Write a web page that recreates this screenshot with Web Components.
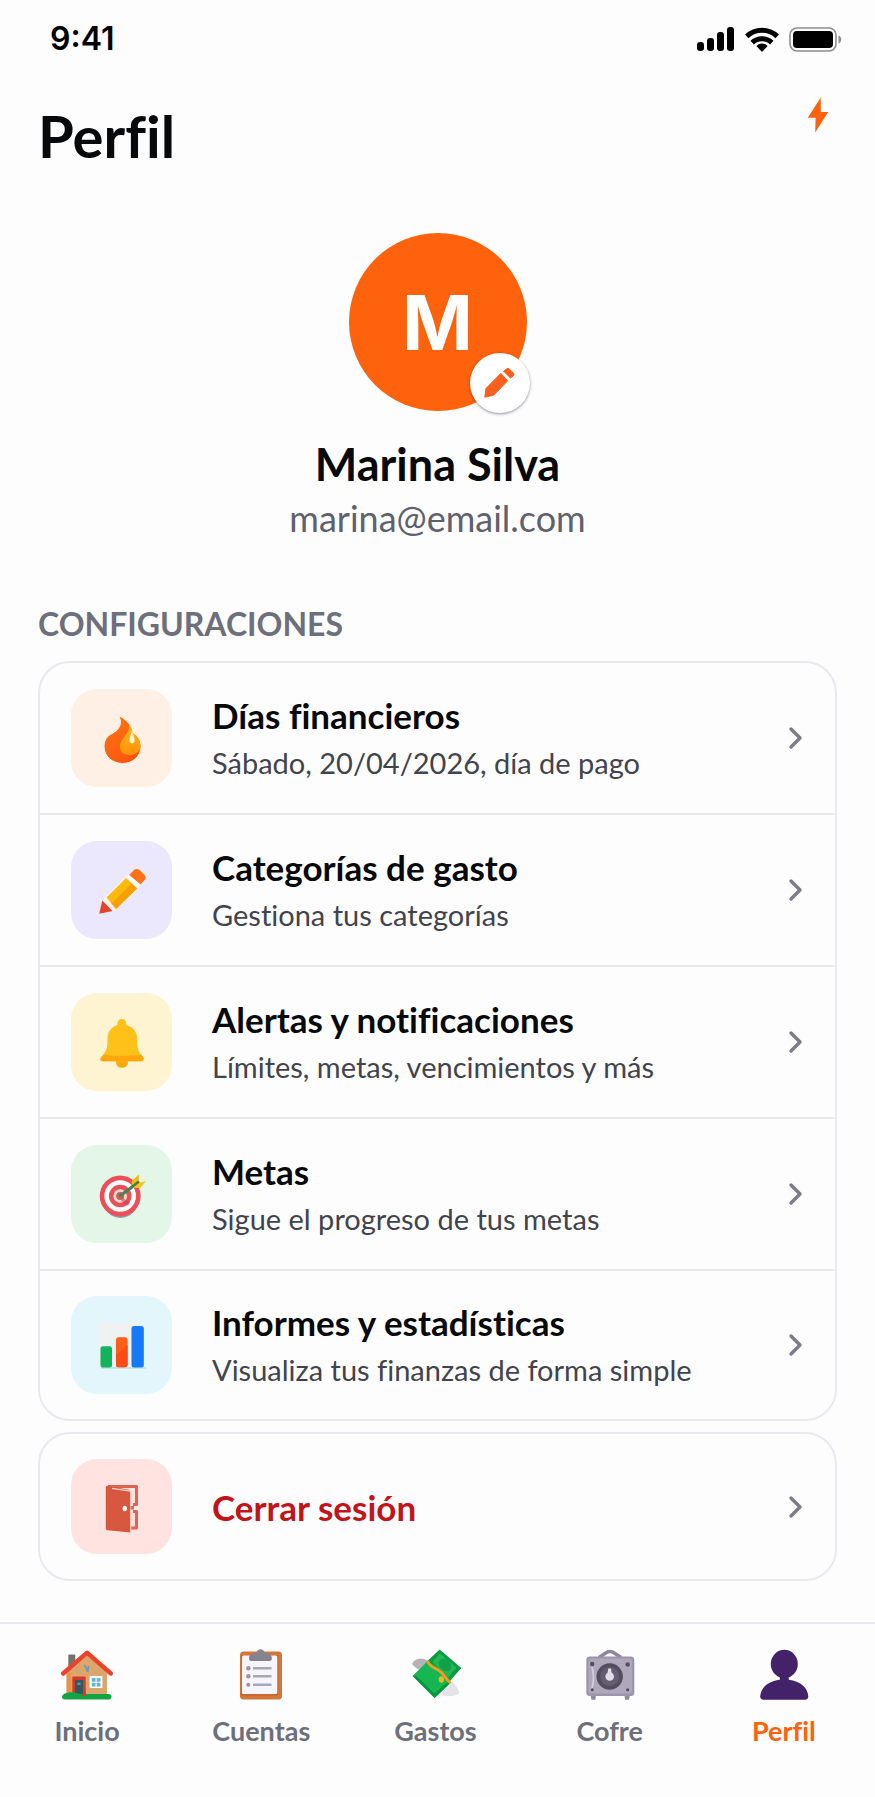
<!DOCTYPE html>
<html lang="es">
<head>
<meta charset="utf-8">
<meta name="viewport" content="width=device-width, initial-scale=1">
<title>Perfil</title>
<style>
    body {
        margin: 0;
        background: #fdfdfe;
        color: #08090b;
        font-family: Lato, "Liberation Sans", sans-serif;
        font-variant-ligatures: none;
        --orange: #fe620c;
        --line: #e8e9ee;
        --muted: #6d6f7a;
    }
</style>
</head>
<body>
<profile-page>
    <status-bar slot="status">9:41</status-bar>
    <page-header slot="header">Perfil</page-header>
    <user-card slot="user" initial="M">
        <span slot="name">Marina Silva</span>
        <span slot="email">marina@email.com</span>
    </user-card>

    <settings-group label="CONFIGURACIONES">
        <settings-row icon="fire" tint="#fef0e5">
            Días financieros
            <span slot="detail">Sábado, 20/04/2026, día de pago</span>
        </settings-row>
        <settings-row icon="pencil" tint="#ebe8fd">
            Categorías de gasto
            <span slot="detail">Gestiona tus categorías</span>
        </settings-row>
        <settings-row icon="bell" tint="#fef4d2">
            Alertas y notificaciones
            <span slot="detail">Límites, metas, vencimientos y más</span>
        </settings-row>
        <settings-row icon="target" tint="#e3f6e8">
            Metas
            <span slot="detail">Sigue el progreso de tus metas</span>
        </settings-row>
        <settings-row icon="chart" tint="#e2f6fc">
            Informes y estadísticas
            <span slot="detail">Visualiza tus finanzas de forma simple</span>
        </settings-row>
    </settings-group>

    <settings-group>
        <settings-row icon="door" tint="#fee3e1" danger>Cerrar sesión</settings-row>
    </settings-group>

    <tab-bar slot="tabs">
        <tab-item icon="house">Inicio</tab-item>
        <tab-item icon="clipboard">Cuentas</tab-item>
        <tab-item icon="money">Gastos</tab-item>
        <tab-item icon="safe">Cofre</tab-item>
        <tab-item icon="person" active>Perfil</tab-item>
    </tab-bar>
</profile-page>

<script>
const ICONS = {
    signal: [38, 24, `
        <rect y="15" width="7" height="9" rx="3"/>
        <rect x="10" y="11" width="7" height="13" rx="3"/>
        <rect x="20" y="5" width="7" height="19" rx="3"/>
        <rect x="30" width="7" height="24" rx="3"/>`],
    wifi: [34, 25, `
        <g fill="none" stroke="#000" stroke-width="5">
            <path d="M1.8 9.4a22 22 0 0 1 30.4 0"/>
            <path d="M7.2 15.6a14.2 14.2 0 0 1 19.6 0"/>
        </g>
        <path d="M17 25l-5.6-6.1a8 8 0 0 1 11.2 0z"/>`],
    battery: [53, 25, `
        <rect x="1" y="1" width="46" height="23" rx="7" fill="none" stroke="#8d8d90" stroke-width="1.6"/>
        <rect x="4" y="4" width="40" height="17" rx="4"/>
        <path d="M49.5 8.5c3.6 1 3.6 7 0 8z" fill="#8d8d90"/>`],
    bolt: [22, 36, `<path d="M13.8.4L.8 20.800h7.800L8.200 35.600l13-20.600h-7.400z" fill="#fe620c"/>`],
    edit: [32, 30, `
        <g fill="#fa5f1d" stroke="#fa5f1d" stroke-linejoin="round">
            <path d="M.8 29.2L2 20.4 16.8 5.4l6.900 7.300L9.600 27.200z"/>
            <path d="M19.600 3.200l3.400-2.600 2 .1 4.800 4.800.1 1.600-3.400 3z"/>
        </g>`],
    chevron: [16, 24, `<path d="M3 3l9 9-9 9" fill="none" stroke="#7b7c86" stroke-width="3.4" stroke-linecap="round" stroke-linejoin="round"/>`],
    fire: [52, 52, `
        <defs>
            <linearGradient id="a" x2=".6" y2="1"><stop stop-color="#ff7a14"/><stop offset="1" stop-color="#fb5510"/></linearGradient>
            <linearGradient id="b" x2="0" y2="1"><stop stop-color="#ffb31c"/><stop offset="1" stop-color="#ff9308"/></linearGradient>
        </defs>
        <path d="M22.5 3.5C30 7 36 13 37 21c5 3 8 8 8 13.500C45 44 37 51.500 26.500 51.500S8 44 8 34.500C8 28 11 24 16 21.500 22 18.300 24.800 14 24.400 9.500 24.200 7 23.500 5.500 22.500 3.500z" fill="url(#a)" stroke="#fff8ef" stroke-width="1"/>
        <path d="M32.800 12.500C34.500 22 24 26 24 35c0 5 4 8 9.500 8 5.700 0 10.500-3 11-8.500 0-5.500-3-10.500-7.700-13.500-.6-3.500-2-6.500-4-8.500z" fill="url(#b)"/>
        <path d="M36 19c-1.500 4-3 8-2.500 10.500.6 2.600 4.400 2.600 5 0C39 27 37.500 23 36 19z" fill="#fff6c8"/>`],
    pencil: [52, 52, `
        <path d="M3.2 49.7L8 33.500 31 11.500 43 23 19.500 46z" fill="#fff3ea"/>
        <path d="M10.500 33.500l19.500-19.500 11 10.500-21 20.500z" fill="#fdb909"/>
        <path d="M15.500 39.300L35.800 19.500l5.200 5-21 20.500z" fill="#f99f06"/>
        <path d="M33 11l5-5.100c1.600-1.300 4-1.300 5.600 0l5 5c1.500 1.700 1.500 3.600 0 5.100l-4.100 4.500z" fill="#fd7216"/>
        <path d="M31 13.200l2-2.200 11.500 9.500-2.500 2.800z" fill="#fff"/>
        <path d="M3.200 49.700L6.300 36.600 16.500 47z" fill="#e6432b"/>`],
    bell: [52, 52, `
        <ellipse cx="26" cy="46.500" rx="6" ry="5.200" fill="#fba80c"/>
        <path d="M25.800 3c-2.700 0-4.300 1.700-4.300 4v2C15 11 11.500 16 11.500 23c0 8-.5 12-5.500 17-2.500 2.500-1.800 5.200 1 5.200h38c2.800 0 3.700-2.700 1.200-5.200-4.500-4.500-5-9-5-17 0-7-4-12-11-14V7c0-2.300-1.700-4-4.400-4z" fill="#fec11a"/>
        <path d="M7.500 38.800c6 1.500 31 1.500 37.400 0l1.600 1.700c2 2.600 1 4.700-1.500 4.700H7c-2.800 0-3.500-2.200-1-4.700z" fill="#fda70d"/>`],
    target: [52, 52, `
        <ellipse cx="24.500" cy="31" rx="18" ry="19" fill="#7fa7ae"/>
        <circle cx="24.200" cy="28" r="20.500" fill="#ed4f5a"/>
        <circle cx="24.200" cy="28" r="15.800" fill="#fff"/>
        <circle cx="24.200" cy="28" r="11.300" fill="#e8515a"/>
        <circle cx="24.200" cy="28" r="6.800" fill="#f6d9cf"/>
        <circle cx="24.200" cy="28" r="4" fill="#c4625c"/>
        <path d="M26 29l8 6-2 3-7-5z" fill="#b93f48" opacity=".5"/>
        <path d="M24.500 27.500L39.500 16.500" stroke="#4d7f5d" stroke-width="3.400" stroke-linecap="round"/>
        <path d="M35.500 17.500l.5-5L43 6.500l-.5 8z" fill="#f2b90f"/>
        <path d="M37 19.500l5.500-5 7.500-1.300-6 7z" fill="#fcc81d"/>
        <path d="M35 19.500l8-6" stroke="#3f8050" stroke-width="2.400"/>`],
    chart: [52, 52, `
        <path d="M3 3.500h41v43H3z" fill="#eff1f3"/>
        <path d="M5 49h45" stroke="#b9dfe0" stroke-width="1.500"/>
        <rect x="4.500" y="27.300" width="11.500" height="21.200" rx="2.500" fill="#10b45b"/>
        <rect x="20" y="18.300" width="11.600" height="30" rx="2.500" fill="#fd5f1a"/>
        <path d="M20 36l11.600-10v20q0 2.300-2.300 2.300h-7q-2.300 0-2.300-2.300z" fill="#f94d15"/>
        <rect x="35.500" y="7" width="12.300" height="41.500" rx="2.500" fill="#147af6"/>`],
    door: [52, 52, `
        <g fill="none" stroke="#dc6450" stroke-width="3" stroke-linejoin="round">
            <path d="M12 5.500h28.500v18H37"/>
            <path d="M37 30.500h3.500V47H35"/>
        </g>
        <path d="M11.500 4.800L33 8.800q1.500.3 1.500 2v40.700L11.500 49.300q-1.700-.2-1.700-2V6.500q0-2 1.700-1.700z" fill="#d7573f"/>
        <path d="M16 7.400l18.500 2.800" stroke="#fbd5cf" stroke-width="1.200"/>
        <path d="M34.800 9v42" stroke="#fbd5cf" stroke-width="1"/>
        <ellipse cx="28.800" cy="27.500" rx="2.200" ry="2.700" fill="#fff"/>
        <rect x="34.500" y="25" width="3.500" height="3.500" fill="#c77468"/>`],
    house: [52, 52, `
        <rect x="7.300" y="5.500" width="7" height="15" rx="1" fill="#7a706a"/>
        <path d="M5.600 24L25.700 5 46 24v23H5.600z" fill="#dba56b"/>
        <path d="M5.600 24h4.200v23H5.600z" fill="#e8924d"/>
        <path d="M2.200 24.500L26 3.700l23.800 20.800" fill="none" stroke="#e9432c" stroke-width="4.400" stroke-linecap="round" stroke-linejoin="round"/>
        <rect x="11.300" y="27.500" width="13.400" height="20" rx="1" fill="#d6382b"/>
        <path d="M14 31h8v16h-8z" fill="#2f5a60"/>
        <path d="M16.500 33.500h3v2.500h-3z" fill="#4e98a5"/>
        <rect x="28.600" y="27" width="12.800" height="12" fill="#fff"/>
        <path d="M30.800 29h3.700v3.700h-3.700zM35.700 29h3.700v3.700h-3.700zM30.800 33.800h3.700v3.700h-3.700zM35.700 33.800h3.700v3.700h-3.700z" fill="#5fb5d6"/>
        <path d="M23.500 16l3 6M27.500 17l-1 6" stroke="#6f9bb5" stroke-width="1.800"/>
        <path d="M4 44.500c3-1.500 6-1.500 8.500-1.200 3 .2 4 1.600 8 1.700h27c4 0 4 5.500 0 5.500H4c-4 0-4-4.500 0-6z" fill="#14a543"/>
        <path d="M20 47h4.700v-5z" fill="#d6382b"/>`],
    clipboard: [52, 52, `
        <rect x="5" y="2.500" width="42" height="48" rx="3.500" fill="#d4763a"/>
        <path d="M6 6h37.500v41H6z" fill="#c96a30"/>
        <rect x="7" y="6.500" width="35.200" height="38.500" rx="1.500" fill="#f6f5fb"/>
        <path d="M14 9.500c0-4.300 3-5.200 7.500-5.700C22-1 29-1 29.500 3.800c4.500.5 7.300 1.400 7.300 5.700 0 1.700-.8 2.500-2.500 2.500h-18c-1.600 0-2.300-.8-2.300-2.500z" fill="#85838f"/>
        <path d="M18 19.200h18.500M18 27.300h18.500M18 35.800h18.500" stroke="#aaa7ba" stroke-width="2.400"/>
        <g fill="#a58d9c"><circle cx="13.300" cy="19.200" r="2.200"/><circle cx="13.300" cy="27.300" r="2.200"/><circle cx="13.300" cy="35.800" r="2"/></g>`],
    money: [52, 52, `
        <path d="M19 12C12 7.500 5.500 9.500 3 15c2 2.500 4 4.500 7 5.500z" fill="#b4b3b8"/>
        <path d="M41 32c5 2 7 6 9.500 11.500-3 4.500-13 4-18.500 2.500z" fill="#e4e4e8"/>
        <path d="M30.700.5L52.300 19 38.500 35 17.800 12.500z" fill="#0c9b41"/>
        <path d="M31 4.500l16.500 14.300-9.500 10.500-14.500-16.500z" fill="#23b856"/>
        <ellipse cx="36" cy="16" rx="7" ry="5.500" transform="rotate(42 36 16)" fill="#12a148"/>
        <path d="M18 12.500L3.600 27l22 22 15.700-15C39 23 30 18 18 12.500z" fill="#16b653"/>
        <path d="M3.600 27L7 26.500l18.500 18L40.500 31l.8 3-15.700 15z" fill="#07973e"/>
        <path d="M18.500 12c2.500 6.500 6.500 6.500 11.500 9.500 5 3.200 6 8 11.300 12.500" fill="none" stroke="#f69b21" stroke-width="2.800"/>
        <ellipse cx="32.300" cy="30.500" rx="2.600" ry="3.200" fill="#eeb91f"/>`],
    safe: [52, 52, `
        <path d="M15 8.500l7.500-5q3.500-2 7 0l7.500 5" fill="none" stroke="#8f889d" stroke-width="3.600"/>
        <path d="M6.500 46h5.500l-.6 4.700H7.500zM40.500 46H46l-1 4.700h-4z" fill="#918a9f"/>
        <rect x="2.300" y="7.500" width="48" height="39.500" rx="3.500" fill="#9b94aa"/>
        <rect x="4.500" y="9.500" width="43.500" height="35" rx="2.500" fill="#afa8bb"/>
        <path d="M8 18c2 7 2 14 0 21" fill="none" stroke="#d2cdd9" stroke-width="1.800"/>
        <circle cx="25.700" cy="27.500" r="13.200" fill="#544d60"/>
        <circle cx="25.700" cy="27.500" r="9.500" fill="#655d72"/>
        <path d="M24.300 19.500h2.700l.5 4.500h-4z" fill="#e4e1e8"/>
        <circle cx="25.700" cy="27.500" r="4.300" fill="#e0dde5"/>
        <g fill="#534e5c"><circle cx="8.200" cy="15" r="2.200"/><circle cx="43.700" cy="15.500" r="2.200"/><circle cx="43.700" cy="40.800" r="1.600"/><circle cx="8.300" cy="40.800" r="1.500"/></g>`],
    person: [52, 52, `
        <ellipse cx="26.300" cy="15" rx="13.500" ry="14.300" fill="#43226a"/>
        <path d="M22.500 26h7.600l.8 4.700C42 32 50 38.500 50.300 47.500c0 2-1.300 3.200-3.300 3.200H5.500c-2 0-3.500-1.200-3.300-3.200.5-9 8.300-15.500 19.500-16.800z" fill="#43226a"/>`]
};

class AppIcon extends HTMLElement {
    connectedCallback() {
        const [width, height, shapes] = ICONS[this.getAttribute('name')];
        this.attachShadow({ mode: 'open' }).innerHTML = `
            <style>
                :host { display: block; flex: none; }
                svg { display: block; }
            </style>
            <svg width="${width}" height="${height}" viewBox="0 0 ${width} ${height}" aria-hidden="true">${shapes}</svg>
        `;
    }
}

class ProfilePage extends HTMLElement {
    connectedCallback() {
        this.attachShadow({ mode: 'open' }).innerHTML = `
            <style>
                :host { display: flex; flex-direction: column; min-height: 100vh; }
                main { display: flex; flex-direction: column; gap: 11px; padding: 66px 38px 40px; flex: 1; }
            </style>
            <slot name="status"></slot>
            <slot name="header"></slot>
            <slot name="user"></slot>
            <main><slot></slot></main>
            <slot name="tabs"></slot>
        `;
    }
}

class StatusBar extends HTMLElement {
    connectedCallback() {
        this.attachShadow({ mode: 'open' }).innerHTML = `
            <style>
                :host {
                    display: flex;
                    justify-content: space-between;
                    align-items: center;
                    padding: 19px 33px 0 50px;
                    font: 600 32px/40px Inter, sans-serif;
                    color: #000;
                }
                div { display: flex; align-items: center; gap: 10px; }
            </style>
            <span><slot></slot></span>
            <div>
                <app-icon name="signal"></app-icon>
                <app-icon name="wifi"></app-icon>
                <app-icon name="battery"></app-icon>
            </div>
        `;
    }
}

class PageHeader extends HTMLElement {
    connectedCallback() {
        this.attachShadow({ mode: 'open' }).innerHTML = `
            <style>
                :host {
                    display: flex;
                    justify-content: space-between;
                    align-items: flex-start;
                    padding: 38px 46px 0 38px;
                }
                h1 { margin: 5px 0 0; font-size: 58px; line-height: 68px; font-weight: 700; }
                button { padding: 0; border: 0; background: none; cursor: pointer; }
            </style>
            <h1><slot></slot></h1>
            <button type="button" aria-label="Acciones"><app-icon name="bolt"></app-icon></button>
        `;
    }
}

class UserCard extends HTMLElement {
    connectedCallback() {
        this.attachShadow({ mode: 'open' }).innerHTML = `
            <style>
                :host { display: flex; flex-direction: column; align-items: center; padding-top: 63px; }
                .avatar {
                    position: relative;
                    display: grid;
                    place-items: center;
                    width: 178px;
                    height: 178px;
                    border-radius: 50%;
                    background: var(--orange);
                    color: #fff;
                    font: 700 76px/92px Inter, sans-serif;
                }
                button {
                    position: absolute;
                    right: -3px;
                    bottom: -2px;
                    display: grid;
                    place-items: center;
                    width: 60px;
                    height: 60px;
                    padding: 0;
                    border: 0;
                    border-radius: 50%;
                    background: #fff;
                    box-shadow: 0 1px 3px rgba(40, 40, 60, .5);
                    cursor: pointer;
                }
                h2 { margin: 26px 0 6px; font-size: 45px; line-height: 54px; font-weight: 700; }
                p { margin: 0; font-size: 36px; line-height: 42px; color: #5f616d; }
            </style>
            <div class="avatar">
                ${this.getAttribute('initial')}
                <button type="button" aria-label="Editar foto"><app-icon name="edit"></app-icon></button>
            </div>
            <h2><slot name="name"></slot></h2>
            <p><slot name="email"></slot></p>
        `;
    }
}

class SettingsGroup extends HTMLElement {
    connectedCallback() {
        const label = this.getAttribute('label');
        this.attachShadow({ mode: 'open' }).innerHTML = `
            <style>
                :host { display: block; }
                h3 { margin: 0 0 18px; font-size: 32px; line-height: 38px; font-weight: 700; color: var(--muted); }
                div { border: 2px solid var(--line); border-radius: 32px; overflow: hidden; }
            </style>
            ${label ? `<h3>${label}</h3>` : ''}
            <div><slot></slot></div>
        `;
    }
}

class SettingsRow extends HTMLElement {
    connectedCallback() {
        const danger = this.hasAttribute('danger');
        const open = danger ? '<button class="row" type="button">' : '<a class="row" href="#">';
        const close = danger ? '</button>' : '</a>';
        this.attachShadow({ mode: 'open' }).innerHTML = `
            <style>
                :host { display: block; border-bottom: 2px solid var(--line); }
                :host(:last-child) { border-bottom: 0; }
                .row {
                    display: flex;
                    align-items: center;
                    gap: 40px;
                    box-sizing: border-box;
                    width: 100%;
                    padding: 26px 31px;
                    border: 0;
                    background: none;
                    color: inherit;
                    font: inherit;
                    text-align: left;
                    text-decoration: none;
                    cursor: pointer;
                }
                :host(:last-child) .row { padding-block: 25px; }
                .tile {
                    display: grid;
                    place-items: center;
                    flex: none;
                    width: 101px;
                    height: 98px;
                    border-radius: 26px;
                    background: ${this.getAttribute('tint')};
                }
                .text { flex: 1; display: flex; flex-direction: column; gap: 6px; }
                .title { font-size: 35px; line-height: 44px; font-weight: 700; }
                .detail { font-size: 29px; line-height: 40px; color: #42444d; }
                :host([danger]) .title { color: #c0151a; }
                :host([danger]) .tile { height: 95px; }
            </style>
            ${open}
                <span class="tile"><app-icon name="${this.getAttribute('icon')}"></app-icon></span>
                <span class="text">
                    <span class="title"><slot></slot></span>
                    ${danger ? '' : '<span class="detail"><slot name="detail"></slot></span>'}
                </span>
                <app-icon name="chevron"></app-icon>
            ${close}
        `;
    }
}

class TabBar extends HTMLElement {
    connectedCallback() {
        this.attachShadow({ mode: 'open' }).innerHTML = `
            <style>
                :host { display: block; border-top: 2px solid var(--line); }
                nav { display: grid; grid-template-columns: repeat(5, 1fr); padding: 25px 4px 50px 0; }
            </style>
            <nav><slot></slot></nav>
        `;
    }
}

class TabItem extends HTMLElement {
    connectedCallback() {
        this.attachShadow({ mode: 'open' }).innerHTML = `
            <style>
                :host { display: block; color: var(--muted); }
                :host([active]) { color: var(--orange); }
                a {
                    display: flex;
                    flex-direction: column;
                    align-items: center;
                    gap: 14px;
                    color: inherit;
                    font-size: 27px;
                    line-height: 32px;
                    font-weight: 700;
                    text-decoration: none;
                }
            </style>
            <a href="#">
                <app-icon name="${this.getAttribute('icon')}"></app-icon>
                <span><slot></slot></span>
            </a>
        `;
    }
}

customElements.define('app-icon', AppIcon);
customElements.define('profile-page', ProfilePage);
customElements.define('status-bar', StatusBar);
customElements.define('page-header', PageHeader);
customElements.define('user-card', UserCard);
customElements.define('settings-group', SettingsGroup);
customElements.define('settings-row', SettingsRow);
customElements.define('tab-bar', TabBar);
customElements.define('tab-item', TabItem);
</script>
</body>
</html>
